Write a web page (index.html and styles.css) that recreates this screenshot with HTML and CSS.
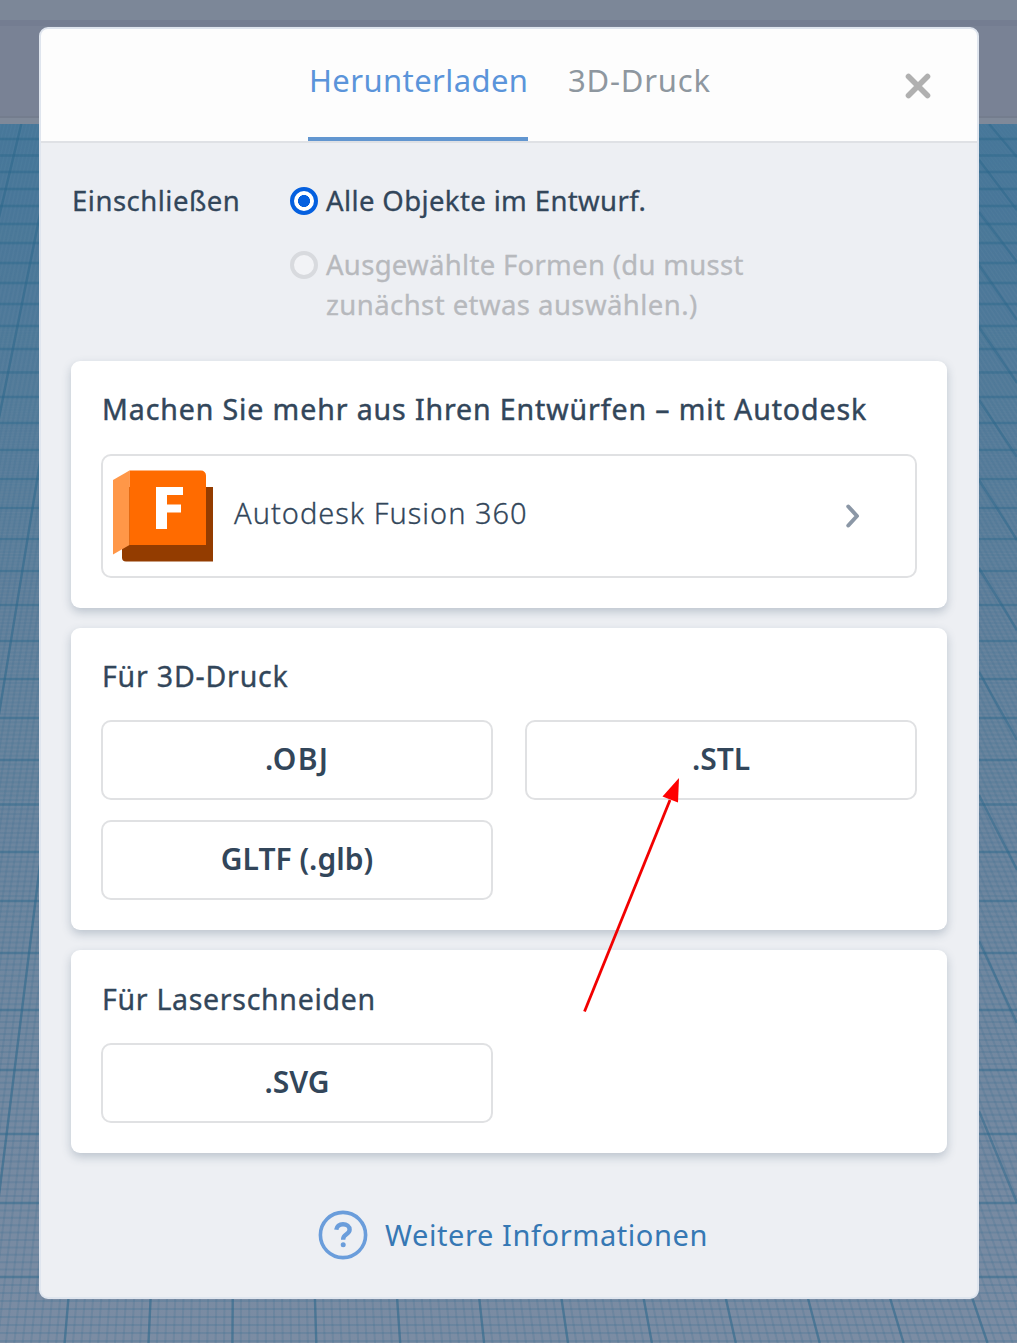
FILE: index.html
```html
<!DOCTYPE html>
<html lang="de">
<head>
<meta charset="utf-8">
<title>Herunterladen</title>
<link rel="stylesheet" href="styles.css">
</head>
<body>
<div class="workspace">
  <div class="topbar"></div>
  <div class="toolbar"></div>
  <svg class="workplane" viewBox="0 124 1017 1219" aria-hidden="true">
    <defs>
      <linearGradient id="plane" x1="0" y1="0" x2="0" y2="1">
        <stop offset="0" stop-color="#4a7a9c"/>
        <stop offset="0.4" stop-color="#66839d"/>
        <stop offset="1" stop-color="#7b8ca3"/>
      </linearGradient>
    </defs>
    <rect y="124" width="1017" height="1219" fill="url(#plane)"/>
    <g id="minor"></g>
    <path id="rows" class="major"/>
    <path id="columns" class="major"/>
    <path class="major" d="M989 124l28 33M979 160l38 50M979 212l38 50M979 265l38 55M979 327l38 56M979 400l38 57M979 480l38 60M979 568l38 62M979 672l38 68M979 795l38 75M979 941l38 82M979 1111l38 92"/>
  </svg>
</div>

<main class="dialog">
  <header class="dialog-header">
    <nav class="tabs">
      <a class="tab tab-active"><span>Herunterladen</span></a>
      <a class="tab"><span>3D-Druck</span></a>
    </nav>
    <button class="close" aria-label="Schließen">
      <svg width="26" height="26" viewBox="0 0 26 26"><path d="M3.500 3.500l19 19M22.500 3.500l-19 19" fill="none" stroke="#b0b0b0" stroke-width="5.600" stroke-linecap="round"/></svg>
    </button>
  </header>

  <div class="dialog-body">
    <section class="include">
      <div class="include-label">Einschließen</div>
      <div class="options">
        <label class="option"><i class="radio radio-on"></i><span>Alle Objekte im Entwurf.</span></label>
        <label class="option option-off"><i class="radio"></i><span>Ausgewählte Formen (du musst<br><span class="option-line">zunächst etwas auswählen.)</span></span></label>
      </div>
    </section>

    <section class="card card-autodesk">
      <h2 class="card-title">Machen Sie mehr aus Ihren Entwürfen – mit Autodesk</h2>
      <button class="fusion">
        <svg class="fusion-logo" width="100" height="92" viewBox="0 0 100 92">
          <path d="M9 17h91v74.500H13a4 4 0 0 1-4-4z" fill="#933c00"/>
          <path d="M0 10L16.500.500v74.500L0 84.500z" fill="#ff9748"/>
          <path d="M16.500.500H88a5 5 0 0 1 5 5V75H16.500z" fill="#ff6b00"/>
          <path d="M43 17h27v8H54v9.500h14v8H54v16.500H43z" fill="#fff"/>
        </svg>
        <span class="fusion-name">Autodesk Fusion 360</span>
        <svg class="chevron" width="14" height="24" viewBox="0 0 14 24"><path d="M2.300 2.500L11 12l-8.700 9.500" fill="none" stroke="#8b97a6" stroke-width="4" stroke-linecap="round" stroke-linejoin="round"/></svg>
      </button>
    </section>

    <section class="card card-print">
      <h2 class="card-title">Für 3D-Druck</h2>
      <div class="formats">
        <button class="format format-obj">.OBJ</button>
        <button class="format">.STL</button>
        <button class="format">GLTF (.glb)</button>
      </div>
    </section>

    <section class="card card-laser">
      <h2 class="card-title">Für Laserschneiden</h2>
      <div class="formats">
        <button class="format">.SVG</button>
      </div>
    </section>

    <a class="more">
      <svg width="50" height="50" viewBox="0 0 50 50"><circle cx="25" cy="25" r="22.600" fill="none" stroke="#6a9ddb" stroke-width="3.600"/><path d="M18.300 19.800c.3-3.600 3-5.600 6.700-5.600s6.600 2.100 6.600 5.500c0 4.600-6.400 4.600-6.400 9.300v.800" fill="none" stroke="#6a9ddb" stroke-width="4.400"/><circle cx="25.200" cy="34.800" r="2.500" fill="#6a9ddb"/></svg>
      <span class="more-text">Weitere Informationen</span>
    </a>
  </div>
</main>

<svg class="pointer" width="100" height="236" viewBox="0 0 100 236" aria-hidden="true">
  <path d="M4.500 233.500L90 22" stroke="#f20000" stroke-width="2.800"/>
  <path d="M99 0L98 24.500 82.500 18.500z" fill="#fe0000"/>
</svg>
<script src="grid.js"></script>
</body>
</html>
```
FILE: styles.css
```css
* { box-sizing: border-box; }
body {
  margin: 0;
  width: 1017px;
  height: 1343px;
  overflow: hidden;
  position: relative;
  font-family: "Noto Sans", "Open Sans", sans-serif;
  color: #32465a;
  padding: 27px 38px 44px 39px;
}
button { font: inherit; color: inherit; background: none; border: 0; padding: 0; }

.workspace { position: absolute; inset: 0; z-index: -1; display: flex; flex-direction: column; }
.topbar { height: 20px; background: #7c8798; }
.toolbar { height: 104px; background: linear-gradient(#747d91 0 6px, #798295 6px 96px, #747d8e 96px 98px, #7f8999 98px); }
.workplane { display: block; width: 1017px; height: 1219px; }
.major { fill: none; stroke: #2b678c; stroke-opacity: .5; stroke-width: 2.4; }
.minor { fill: none; stroke: #3c6f92; stroke-width: 2; }

.dialog {
  width: 940px;
  height: 1272px;
  border: 2px solid #dfe5ee;
  border-radius: 9px;
  background: #edeff3;
  overflow: hidden;
}
.dialog-header {
  height: 114px;
  background: #fdfdfd;
  border-bottom: 2px solid #dfe1e5;
  display: flex;
  justify-content: space-between;
  padding: 0 46px 0 267px;
}
.tabs { display: flex; gap: 40px; }
.tab { height: 112px; line-height: 102px; font-size: 31px; color: #8e979f; letter-spacing: .8px; white-space: nowrap; }
.tab-active { width: 220px; padding-left: 1px; color: #5a94da; border-bottom: 4px solid #6296d0; letter-spacing: .4px; }
.close { margin-top: 44px; height: 26px; display: flex; }

.dialog-body { padding: 30px 30px 0; }
.include { display: flex; height: 188px; font-size: 27.5px; line-height: 40px; letter-spacing: .38px; -webkit-text-stroke: .3px; }
.include-label { width: 219px; padding-top: 8px; padding-left: 1px; letter-spacing: .5px; }
.options { display: flex; flex-direction: column; gap: 24px; padding-top: 8px; }
.option { display: flex; gap: 8px; white-space: nowrap; }
.option-off { color: #b7b9bd; letter-spacing: .3px; }
.option-line { letter-spacing: .43px; }
.radio { width: 28px; height: 28px; margin-top: 6px; border: 4px solid #d8dade; border-radius: 50%; background: #f2f3f6; }
.radio-on { border-color: #0560df; background: radial-gradient(circle, #0560df 5.700px, #fff 6.300px); }

.card {
  height: 203px;
  margin-bottom: 20px;
  padding: 17px 30px 30px;
  background: #fff;
  border-radius: 9px;
  box-shadow: 0 4px 10px rgba(60, 85, 110, .28);
}
.card-autodesk { height: 247px; }
.card-print { height: 302px; }
.card-print .card-title { margin-bottom: 13px; }
.card-title { margin: 0 0 14px; padding-left: 1px; font-size: 28.5px; line-height: 62px; font-weight: 400; letter-spacing: .8px; white-space: nowrap; -webkit-text-stroke: .35px; }
.card-autodesk .card-title { letter-spacing: .9px; -webkit-text-stroke: .45px; }
.card-laser .card-title { line-height: 64px; margin-bottom: 12px; letter-spacing: .7px; }
.fusion { width: 100%; height: 124px; border: 2px solid #e0e1e3; border-radius: 10px; display: flex; align-items: center; padding: 0 55px 0 10px; }
.fusion-name { margin-left: 21px; font-size: 29px; font-weight: 300; letter-spacing: 1px; white-space: nowrap; padding-bottom: 7px; -webkit-text-stroke: .3px; }
.chevron { margin-left: auto; }
.formats { display: grid; grid-template-columns: 392px 392px; gap: 20px 32px; }
.format { height: 80px; border: 2px solid #e0e1e3; border-radius: 10px; font-size: 30px; font-weight: 600; padding-bottom: 4px; }
.format-obj { letter-spacing: 1.2px; }
.more { display: flex; justify-content: center; align-items: center; gap: 17px; height: 50px; margin-top: 57px; padding-left: 8px; font-size: 29px; color: #3678b4; letter-spacing: .58px; white-space: nowrap; }
.more-text { padding-bottom: 2px; }
.pointer { position: absolute; left: 580px; top: 778px; }
```
FILE: grid.js
```js
// Perspective grid of the workplane: columns meet at one vanishing point.
const rows = [139, 155.5, 172, 189, 206, 224, 243, 263, 283, 304, 326, 349, 372.5, 397, 423, 450, 479, 508, 539, 571, 605, 641, 679, 718, 760, 804.5, 852, 901, 953, 1010, 1070, 1134, 1203, 1277, 1357];
document.getElementById('rows').setAttribute('d', rows.map(y => `M0 ${y}H1017`).join(''));

const column = k => `M${279.1 + 36.83 * k} 124L${316.3 + 83.9 * k} 1343`;
let d = '';
for (let k = -8; k <= 8; k++) d += column(k);
document.getElementById('columns').setAttribute('d', d);

const minor = document.getElementById('minor');
const add = (path, opacity) => {
  const p = document.createElementNS('http://www.w3.org/2000/svg', 'path');
  p.setAttribute('d', path);
  p.setAttribute('class', 'minor');
  p.setAttribute('stroke-opacity', opacity);
  minor.append(p);
};
for (let i = 0; i < rows.length - 1; i++) {
  let path = '';
  for (let j = 1; j < 10; j++) path += `M0 ${rows[i] + (rows[i + 1] - rows[i]) * j / 10}H1017`;
  add(path, 0.05 + 0.2 * i / rows.length);
}
let fine = '';
for (let k = -8; k <= 20; k += 0.1) fine += column(k);
add(fine, 0.2);
```
